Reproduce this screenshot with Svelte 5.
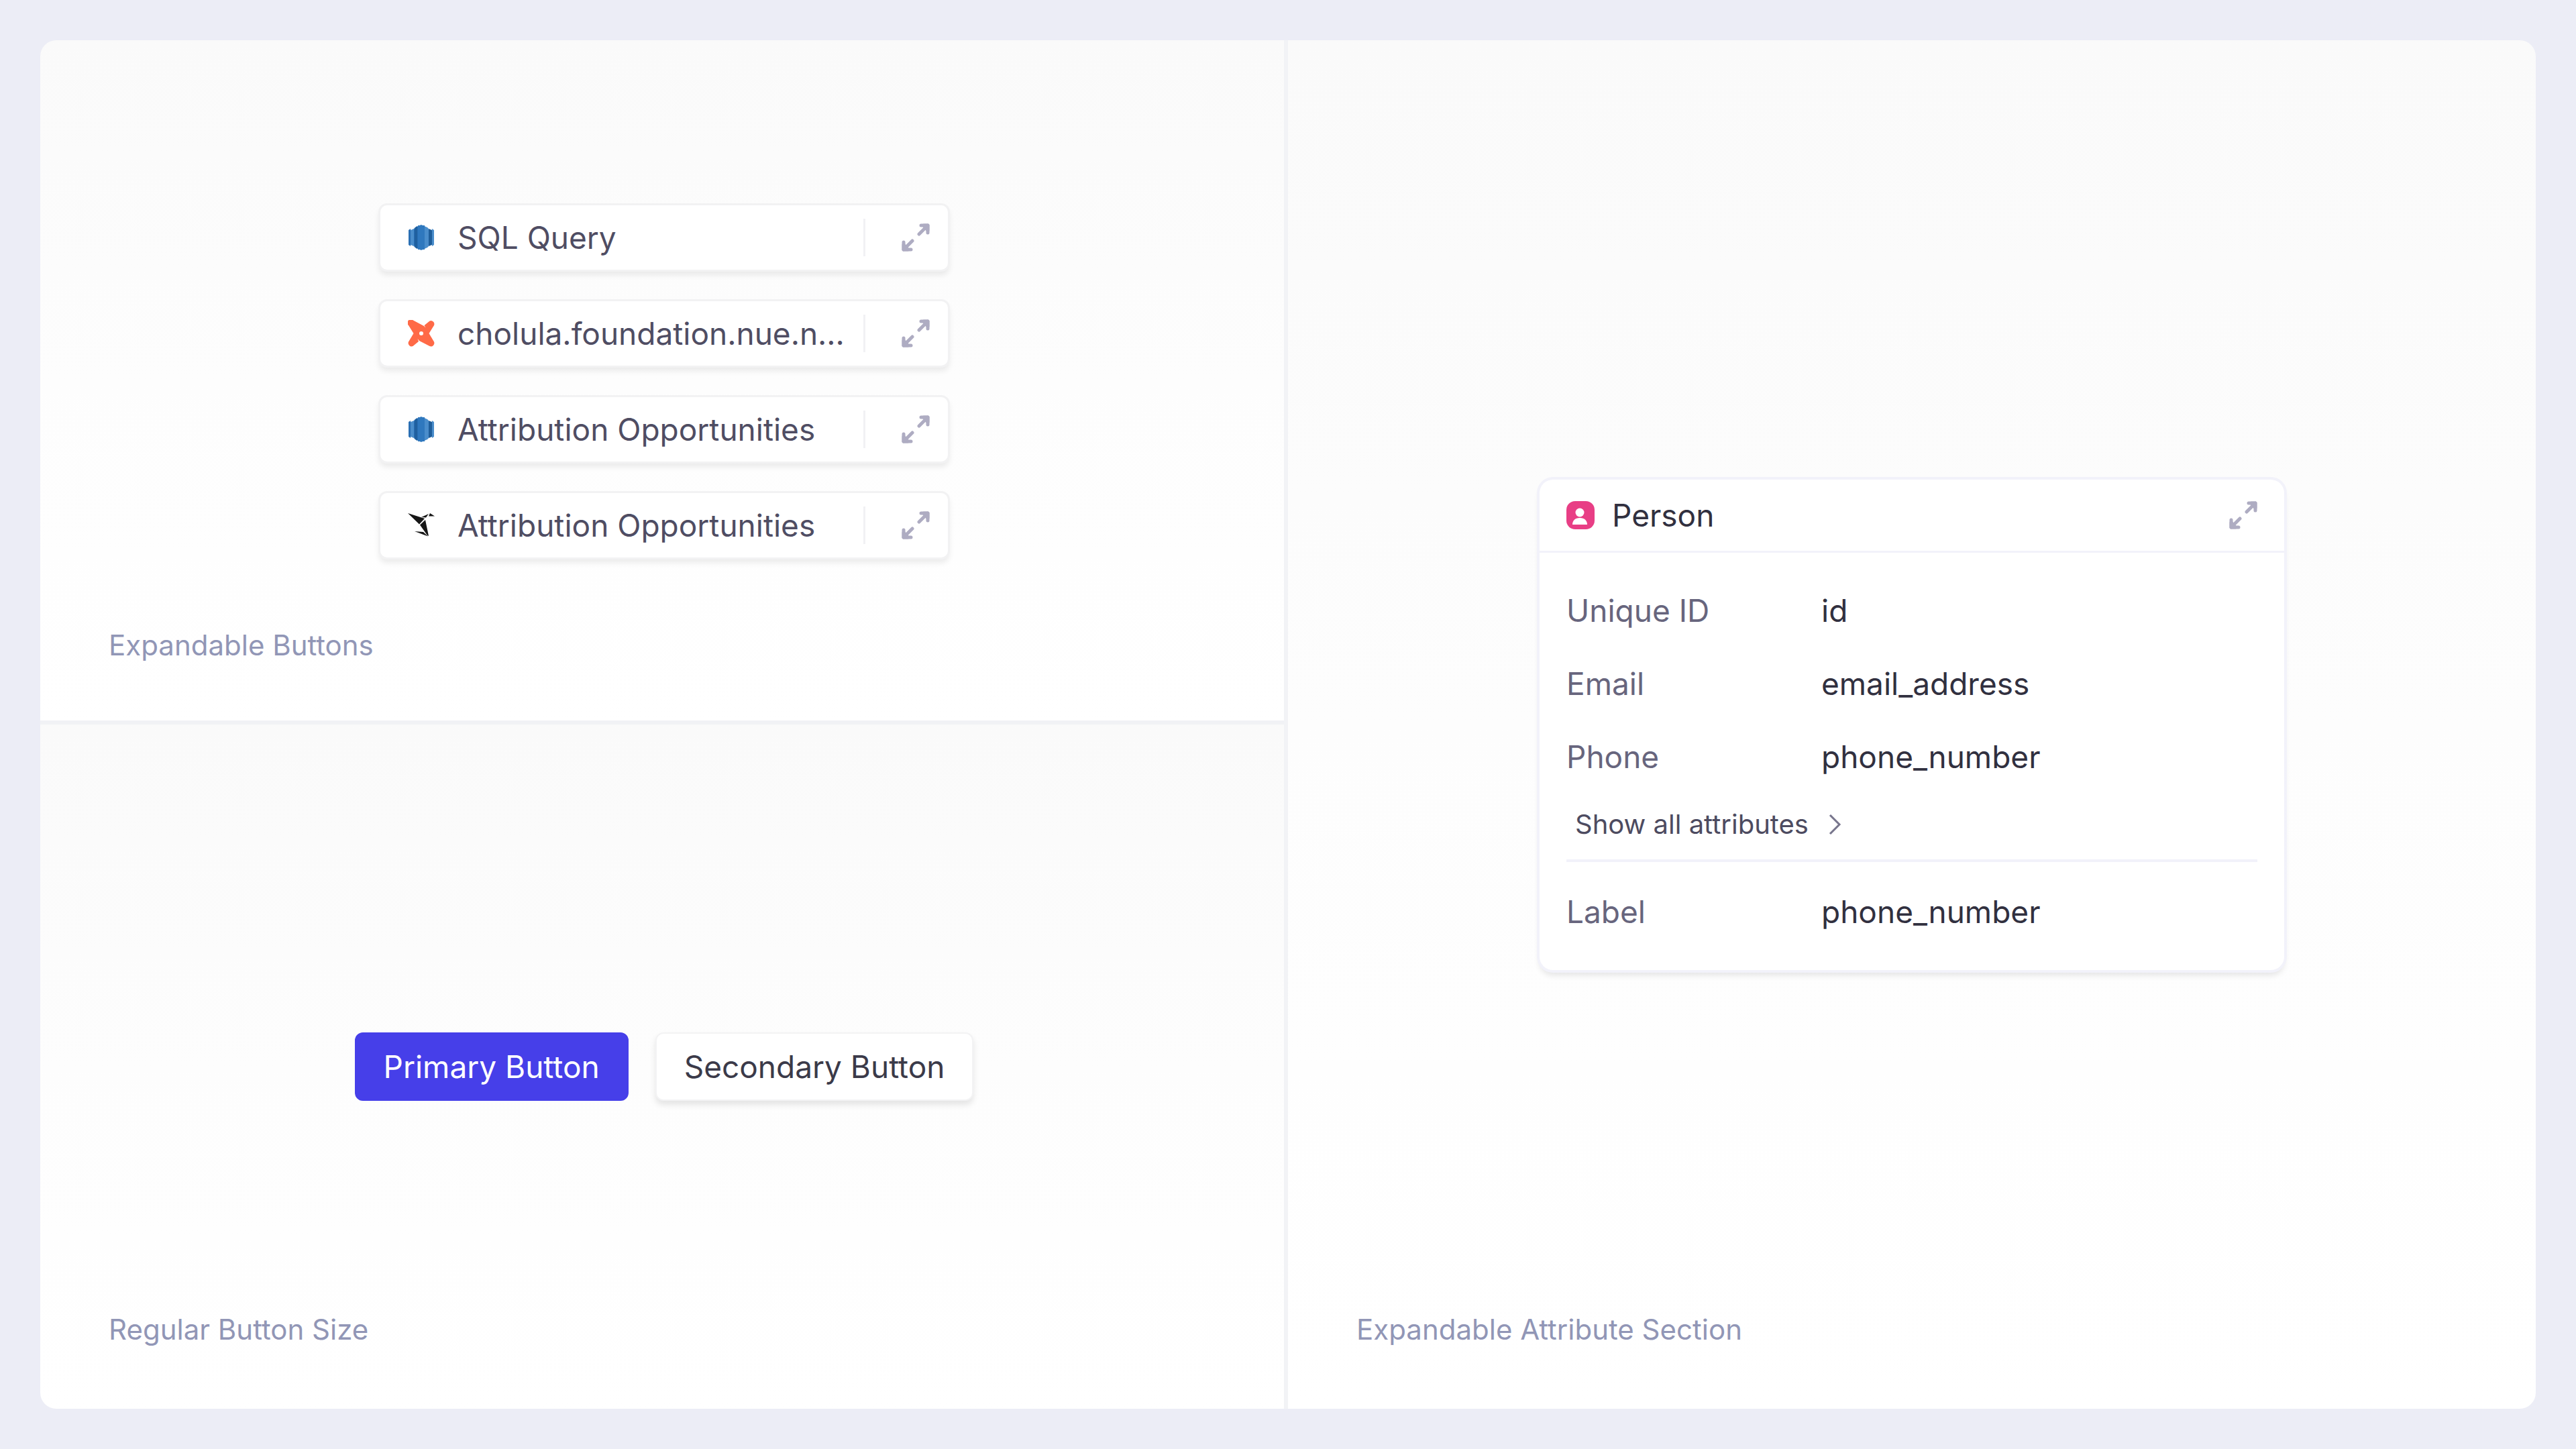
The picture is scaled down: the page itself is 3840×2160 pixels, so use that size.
<script lang="ts">
	type Source = 'redshift' | 'dbt' | 'bird';

	const sources: { icon: Source; label: string }[] = [
		{ icon: 'redshift', label: 'SQL Query' },
		{ icon: 'dbt', label: 'cholula.foundation.nue.n...' },
		{ icon: 'redshift', label: 'Attribution Opportunities' },
		{ icon: 'bird', label: 'Attribution Opportunities' }
	];

	const attributes = [
		{ name: 'Unique ID', value: 'id' },
		{ name: 'Email', value: 'email_address' },
		{ name: 'Phone', value: 'phone_number' }
	];
</script>

<svelte:head>
	<title>Components</title>
</svelte:head>

{#snippet expandIcon()}
	<svg class="expand-icon" viewBox="0 0 42 42" aria-hidden="true">
		<path d="M29 3h10v11M39 3L26 16M14 39H3V28M3 39l13-13" />
		<path d="M33 3h6v7zM9 39H3v-7z" />
	</svg>
{/snippet}

{#snippet sourceIcon(icon: Source)}
	<svg class="source-icon" viewBox="0 0 40 40" aria-hidden="true">
		{#if icon === 'redshift'}
			<path fill="#1f5e9b" d="M31 7l5 2v22l-5 2z" />
			<path fill="#4a8dcb" d="M36 7l3 2v22l-3 2z" />
			<path fill="#4a8dcb" d="M9 7L4 9v22l5 2z" />
			<path fill="#2a6fb4" d="M4 7L1 9v22l3 2z" />
			<path fill="#4a8dcb" d="M20 1l9 4q2 1 2 3v24q0 2-2 3l-9 4z" />
			<path fill="#276db3" d="M20 1l-9 4q-2 1-2 3v24q0 2 2 3l9 4z" />
			<path fill="#2f78be" d="M15 2h10v36H15z" />
			<path fill="#1f609f" d="M10 8q0-3 4-5v34q-4-2-4-5z" />
		{:else if icon === 'dbt'}
			<path
				fill="#ff6a47"
				d="M8 .5L24 9l2.500 2.500L24.500 8l8-6.500a5 5 0 0 1 6.500 6.500L31.500 20 39 32.500a5 5 0 0 1-6.500 6.500L17 31l-2.500-3 1.500 4-8.500 7a5 5 0 0 1-6.500-6.500L8.500 20 1 8A5 5 0 0 1 8 .5z"
			/>
			<circle cx="20" cy="20" r="3" fill="#fff" />
		{:else}
			<path fill="#161616" d="M0 2l25 8-8 8.500zM26 12l-8 7.500L29 35l2 1z" />
			<path fill="#161616" d="M20 8l11-5-4 5.500zM10 29l13 1 7 6.500zM33 2l7 4.500h-9z" />
		{/if}
	</svg>
{/snippet}

<main class="board">
	<section class="panel panel-top">
		<div class="stack">
			{#each sources as source}
				<div class="split-button">
					<button class="split-main" type="button">
						{@render sourceIcon(source.icon)}
						<span>{source.label}</span>
					</button>
					<button class="split-expand" type="button" aria-label="Expand {source.label}">
						{@render expandIcon()}
					</button>
				</div>
			{/each}
		</div>
		<h2>Expandable Buttons</h2>
	</section>

	<section class="panel panel-bottom">
		<div class="actions">
			<button class="button primary" type="button">Primary Button</button>
			<button class="button secondary" type="button">Secondary Button</button>
		</div>
		<h2>Regular Button Size</h2>
	</section>

	<section class="panel panel-side">
		<article class="card">
			<header>
				<svg class="person-icon" viewBox="0 0 42 42" aria-hidden="true">
					<rect width="42" height="42" rx="13" fill="#e83e85" />
					<circle cx="20" cy="17" r="6.500" fill="#fff" />
					<path fill="#fff" d="M9 35c0-6 4-10 11-10s11 4 11 10z" />
				</svg>
				<h3>Person</h3>
				<button class="card-expand" type="button" aria-label="Expand Person">
					{@render expandIcon()}
				</button>
			</header>
			<div class="card-body">
				<dl>
					{#each attributes as attribute}
						<div class="row">
							<dt>{attribute.name}</dt>
							<dd>{attribute.value}</dd>
						</div>
					{/each}
				</dl>
				<button class="show-all" type="button">
					Show all attributes
					<svg viewBox="0 0 20 32" aria-hidden="true"><path d="M2 2l14 14L2 30" /></svg>
				</button>
				<dl class="label-list">
					<div class="row">
						<dt>Label</dt>
						<dd>phone_number</dd>
					</div>
				</dl>
			</div>
		</article>
		<h2>Expandable Attribute Section</h2>
	</section>
</main>

<style>
	:global(body) {
		background: #ecedf6;
		font-family: Inter, 'Liberation Sans', sans-serif;
	}

	h2,
	h3,
	dl,
	dd {
		margin: 0;
	}

	button {
		margin: 0;
		padding: 0;
		border: 0;
		background: none;
		font: inherit;
		color: inherit;
		cursor: pointer;
	}

	svg {
		display: block;
		flex: none;
	}

	.board {
		box-sizing: border-box;
		min-height: 100vh;
		padding: 60px;
		display: grid;
		grid-template-columns: 1fr 1fr;
		grid-template-rows: 1fr 1fr;
		font-size: 46px;
		line-height: 56px;
	}

	.panel {
		display: grid;
		grid-template-rows: 1fr auto 1fr;
		justify-items: center;
		background: linear-gradient(#fafafa, #fdfdfd 50%, #fff);
	}

	.panel > :first-child {
		grid-row: 2;
	}

	.panel h2 {
		grid-row: 3;
		align-self: end;
		justify-self: start;
		padding: 0 102px 92px;
		font-size: 42px;
		font-weight: 400;
		line-height: 52px;
		color: #9196b6;
	}

	.panel-top {
		border-top-left-radius: 24px;
		box-shadow:
			inset -6px 0 #f2f3f6,
			inset 0 -6px #f1f2f5;
	}

	.panel-bottom {
		border-bottom-left-radius: 24px;
		box-shadow: inset -6px 0 #f2f3f6;
	}

	.panel-side {
		grid-column: 2;
		grid-row: 1 / 3;
		border-radius: 0 24px 24px 0;
	}

	.stack {
		display: grid;
		gap: 47px;
		padding-bottom: 4px;
	}

	.split-button {
		display: flex;
		align-items: center;
		width: 846px;
		height: 96px;
		border-radius: 10px;
		background: #fff;
		box-shadow:
			0 0 0 3px #f2f2f3,
			0 6px 8px 2px rgba(0, 0, 0, 0.08);
		color: #4f4d63;
	}

	.split-main {
		flex: 1;
		display: flex;
		align-items: center;
		gap: 34px;
		padding-left: 41px;
		white-space: nowrap;
	}

	.split-expand {
		padding: 7px 27px 7px 54px;
		border-left: 3px solid #f1f1f4;
	}

	.source-icon {
		width: 40px;
		height: 40px;
	}

	.expand-icon {
		width: 42px;
		height: 42px;
		fill: none;
		stroke: #aeacc2;
		stroke-width: 5;
		stroke-linecap: round;
		stroke-linejoin: round;
	}

	.actions {
		display: flex;
		gap: 40px;
	}

	.button {
		padding: 21px 41px;
		border: 2px solid transparent;
		border-radius: 12px;
		white-space: nowrap;
	}

	.primary {
		border-color: #463fe9;
		background: #463fe9;
		color: #fff;
	}

	.secondary {
		border-color: #f3f3f4;
		background: #fff;
		box-shadow: 0 6px 10px rgba(0, 0, 0, 0.1);
		color: #3b3a49;
	}

	.card {
		width: 1110px;
		border-radius: 20px;
		background: #fff;
		box-shadow:
			0 0 0 4px #f2f2fa,
			0 8px 10px rgba(0, 0, 0, 0.1);
		color: #31303f;
	}

	header {
		display: flex;
		align-items: center;
		gap: 26px;
		padding: 25px 40px;
		border-bottom: 3px solid #f2f2fa;
	}

	h3 {
		flex: 1;
		font-size: 46px;
		font-weight: 400;
	}

	.person-icon {
		width: 42px;
		height: 42px;
	}

	.card-body {
		padding: 58px 40px 59px;
	}

	dl {
		display: grid;
		gap: 53px;
	}

	.row {
		display: grid;
		grid-template-columns: 380px 1fr;
	}

	dt {
		color: #67657d;
	}

	.show-all {
		display: flex;
		align-items: center;
		gap: 30px;
		margin: 49px 13px 28px;
		font-size: 40px;
		line-height: 48px;
		color: #4d4b60;
	}

	.show-all svg {
		width: 20px;
		height: 32px;
		fill: none;
		stroke: #77758c;
		stroke-width: 3;
	}

	.label-list {
		padding-top: 46px;
		border-top: 4px solid #f2f2fa;
	}
</style>
